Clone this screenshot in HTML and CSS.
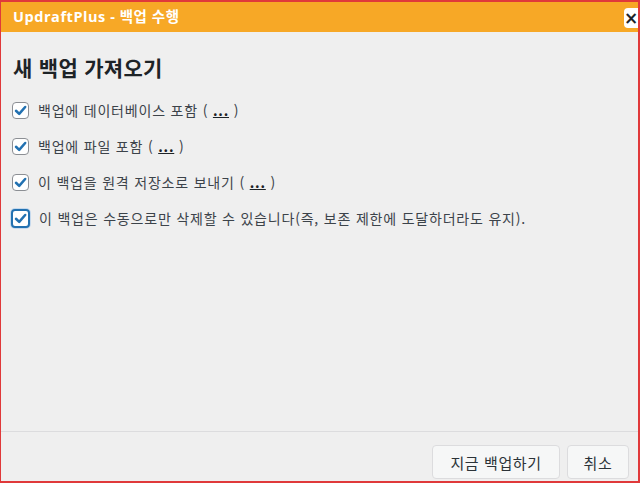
FILE: index.html
```html
<!DOCTYPE html>
<html lang="ko">
<head>
<meta charset="utf-8">
<link rel="stylesheet" href="styles.css">
</head>
<body>
<div class="dialog">
  <div class="titlebar">
    <span class="title">UpdraftPlus - 백업 수행</span>
    <span class="close">×</span>
  </div>
  <div class="content">
    <h2 class="heading">새 백업 가져오기</h2>
    <div class="option">
      <span class="cb"><svg viewBox="0 0 16 16"><path d="M3.2 8.3 L6.6 11.6 L13 4.3" fill="none" stroke="#2271b1" stroke-width="2.7" stroke-linecap="round" stroke-linejoin="round"/></svg></span>
      <span class="label">백업에 데이터베이스 포함 ( <a class="more">...</a> )</span>
    </div>
    <div class="option">
      <span class="cb"><svg viewBox="0 0 16 16"><path d="M3.2 8.3 L6.6 11.6 L13 4.3" fill="none" stroke="#2271b1" stroke-width="2.7" stroke-linecap="round" stroke-linejoin="round"/></svg></span>
      <span class="label">백업에 파일 포함 ( <a class="more">...</a> )</span>
    </div>
    <div class="option">
      <span class="cb"><svg viewBox="0 0 16 16"><path d="M3.2 8.3 L6.6 11.6 L13 4.3" fill="none" stroke="#2271b1" stroke-width="2.7" stroke-linecap="round" stroke-linejoin="round"/></svg></span>
      <span class="label">이 백업을 원격 저장소로 보내기 ( <a class="more">...</a> )</span>
    </div>
    <div class="option">
      <span class="cb focus"><svg viewBox="0 0 16 16"><path d="M3.2 8.3 L6.6 11.6 L13 4.3" fill="none" stroke="#2271b1" stroke-width="2.7" stroke-linecap="round" stroke-linejoin="round"/></svg></span>
      <span class="label">이 백업은 수동으로만 삭제할 수 있습니다(즉, 보존 제한에 도달하더라도 유지).</span>
    </div>
  </div>
  <div class="footer">
    <button class="btn">지금 백업하기</button>
    <button class="btn">취소</button>
  </div>
</div>
</body>
</html>
```
FILE: styles.css
```css
html, body {
  margin: 0;
  padding: 0;
}
body {
  font-family: "Open Sans", "Noto Sans CJK KR", sans-serif;
  background: #f0f0f0;
}
.dialog {
  box-sizing: border-box;
  width: 640px;
  height: 483px;
  border: 2px solid #e0393a;
  border-left-width: 1px;
  background: #efefef;
  display: flex;
  flex-direction: column;
  overflow: hidden;
}
.titlebar {
  height: 30px;
  background: #f7a826;
  display: flex;
  align-items: center;
  justify-content: space-between;
  padding-left: 12px;
  flex-shrink: 0;
}
.title {
  color: #ffffff;
  font-weight: 700;
  font-size: 14.5px;
  letter-spacing: 0.55px;
  line-height: 30px;
}
.close {
  width: 14px;
  height: 20px;
  margin-top: 2px;
  background: #ffffff;
  border-radius: 4px 0 0 4px;
  color: #1d2327;
  font-family: "DejaVu Sans", sans-serif;
  font-weight: 700;
  font-size: 17px;
  line-height: 20px;
  text-align: right;
  overflow: hidden;
}
.content {
  flex: 1;
  padding: 20px 12px 0 10px;
}
.heading {
  margin: 0 0 10px 2px;
  font-family: "Noto Sans CJK KR", sans-serif;
  font-size: 21px;
  font-weight: 700;
  color: #1d2327;
  line-height: 30px;
  letter-spacing: 0.3px;
}
.option {
  display: flex;
  align-items: center;
  gap: 9px;
  height: 36px;
}
.cb {
  box-sizing: border-box;
  width: 17px;
  height: 17px;
  border: 1px solid #8c8f94;
  border-radius: 4px;
  background: #fff;
  display: flex;
  align-items: center;
  justify-content: center;
  margin-left: 1px;
}
.cb svg {
  width: 15px;
  height: 15px;
  display: block;
}
.cb.focus {
  width: 19px;
  height: 19px;
  margin-left: 0;
  border: 2px solid #2271b1;
  box-shadow: 0 0 0 1px #c5d9ed;
}
.label {
  font-family: "Noto Sans CJK KR", sans-serif;
  font-size: 14px;
  letter-spacing: 0.8px;
  color: #3c434a;
  line-height: 20px;
}
.more {
  color: #1d2327;
  text-decoration: underline;
  font-weight: 700;
}
.footer {
  flex-shrink: 0;
  border-top: 1px solid #dcdcde;
  display: flex;
  justify-content: flex-end;
  gap: 7px;
  padding: 13px 9px 2px 0;
}
.btn {
  box-sizing: border-box;
  height: 34px;
  padding: 0;
  border: 1px solid #dcdcde;
  border-radius: 4px;
  background: #f6f7f7;
  font-family: "Noto Sans CJK KR", sans-serif;
  font-size: 15px;
  letter-spacing: 0.6px;
  color: #2c3338;
}
.btn:first-child {
  width: 128px;
}
.btn:last-child {
  width: 62px;
}
```
